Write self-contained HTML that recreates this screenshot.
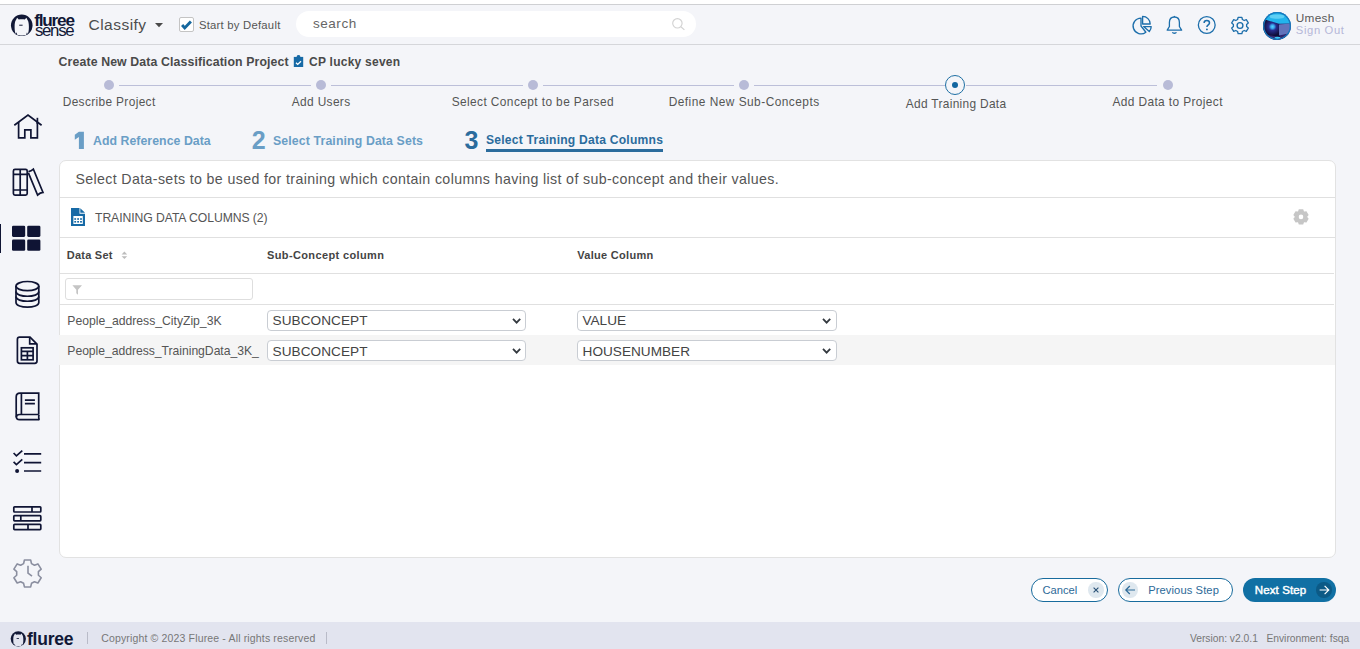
<!DOCTYPE html>
<html><head><meta charset="utf-8">
<style>
*{box-sizing:border-box;margin:0;padding:0}
html,body{width:1360px;height:649px;overflow:hidden;background:#f4f5f9;font-family:"Liberation Sans",sans-serif;color:#444}
.a{position:absolute}
.t{position:absolute;white-space:nowrap}
svg{position:absolute;overflow:visible}
</style></head><body>
<div class="a" style="left:0;top:0;width:1360px;height:4px;background:#fff"></div><div class="a" style="left:0;top:4px;width:1360px;height:1px;background:#cfd0d3"></div><div class="a" style="left:0;top:44px;width:1360px;height:1px;background:#d5d6da"></div><svg style="left:0;top:0" width="80" height="45" viewBox="0 0 80 45">
<circle cx="21.75" cy="25.3" r="10.8" fill="#111836"/>
<path d="M14.6 27 C14.6 23.5 15 21.2 16 20 L17.1 17.7 L18.8 19.5 C20.3 19.1 23.2 19.1 24.7 19.5 L26.4 17.7 L27.5 20 C28.5 21.2 28.9 23.5 28.9 27 C28.9 30.8 28.4 33 27.6 34 L27 32.2 L26.1 35 C24.5 35.6 19 35.6 17.4 35 L16.5 32.2 L15.9 34 C15.1 33 14.6 30.8 14.6 27Z" fill="#f4f5f9"/>
<rect x="19.2" y="24.7" width="3.4" height="1" fill="#111836"/>
</svg><div class="t" style="left:34.30px;top:12.24px;font-size:17.2px;line-height:17.2px;color:#111836;letter-spacing:-1.228px;font-weight:bold;">fluree</div>
<div class="t" style="left:35.00px;top:22.98px;font-size:16.8px;line-height:16.8px;color:#111836;letter-spacing:-1.308px;">sense</div>
<div class="t" style="left:88.50px;top:16.88px;font-size:15.5px;line-height:15.5px;color:#4d4d4d;letter-spacing:0.477px;">Classify</div>
<svg style="left:155px;top:23px" width="8" height="5"><path d="M0 0H8L4 4.3Z" fill="#4a4a4a"/></svg><div class="a" style="left:179.3px;top:17.3px;width:14.6px;height:14.4px;background:#fff;border:1.1px solid #c4c4c4;border-radius:2px"></div><svg style="left:179px;top:17px" width="15" height="15"><path d="M3.1 8.1 L5.7 10.9 L11.9 4.6" stroke="#15679e" stroke-width="2.9" fill="none"/></svg><div class="t" style="left:198.90px;top:19.63px;font-size:11.3px;line-height:11.3px;color:#555;letter-spacing:0.235px;">Start by Default</div>
<div class="a" style="left:295.7px;top:11px;width:400.3px;height:26px;background:#fff;border-radius:13px"></div><div class="t" style="left:312.90px;top:17.17px;font-size:13.5px;line-height:13.5px;color:#666;letter-spacing:0.556px;">search</div>
<svg style="left:671px;top:17.2px" width="16" height="14" viewBox="0 0 16 14"><circle cx="6.4" cy="6.3" r="4.7" stroke="#d3d3d3" stroke-width="1.15" fill="none"/><path d="M9.9 9.7 L13.4 12.9" stroke="#d3d3d3" stroke-width="1.2"/></svg><svg style="left:1128px;top:12px" width="28" height="26" viewBox="0 0 28 26">
<path d="M13 14 L13 6.1 A7.9 7.9 0 1 0 17.86 20.23 Z" stroke="#1c6eab" stroke-width="1.35" fill="none" stroke-linejoin="round"/>
<path d="M14.6 12 L14.6 4.4 A7.6 7.6 0 0 1 22.2 12 Z" stroke="#1c6eab" stroke-width="1.35" fill="none" stroke-linejoin="round"/>
<path d="M15.6 14.6 L23.2 14.6 A7.6 7.6 0 0 1 21.3 19.6 Z" stroke="#1c6eab" stroke-width="1.35" fill="none" stroke-linejoin="round"/>
</svg><svg style="left:1166px;top:15px" width="18" height="20" viewBox="0 0 18 20">
<path d="M8.4 2 C5 2 3.4 4.6 3.4 7.6 L3.4 11.5 L1.2 15.2 L15.6 15.2 L13.4 11.5 L13.4 7.6 C13.4 4.6 11.8 2 8.4 2 Z" stroke="#1c6eab" stroke-width="1.3" fill="none" stroke-linejoin="round"/>
<path d="M8.4 0.9 L8.4 2" stroke="#1c6eab" stroke-width="1.3"/>
<path d="M6.4 17.2 C7 18.6 9.8 18.6 10.4 17.2" stroke="#1c6eab" stroke-width="1.3" fill="none"/>
</svg><svg style="left:1197px;top:16px" width="20" height="19" viewBox="0 0 20 19">
<circle cx="9.75" cy="9" r="8.4" stroke="#1c6eab" stroke-width="1.3" fill="none"/>
<path d="M7.1 7.1 C7.1 5.5 8.3 4.6 9.8 4.6 C11.3 4.6 12.5 5.5 12.5 7 C12.5 8.8 9.9 9 9.9 11" stroke="#1c6eab" stroke-width="1.5" fill="none"/>
<circle cx="9.9" cy="13.4" r="0.95" fill="#1c6eab"/>
</svg><svg style="left:1230px;top:16px" width="20" height="19" viewBox="-10 -9.5 20 19">
<path d="M-1.9 -8.2 L1.9 -8.2 L2.4 -6 L4.2 -5 L6.3 -5.8 L8.3 -2.6 L6.6 -1.1 L6.6 1.1 L8.3 2.6 L6.3 5.8 L4.2 5 L2.4 6 L1.9 8.2 L-1.9 8.2 L-2.4 6 L-4.2 5 L-6.3 5.8 L-8.3 2.6 L-6.6 1.1 L-6.6 -1.1 L-8.3 -2.6 L-6.3 -5.8 L-4.2 -5 L-2.4 -6 Z" stroke="#1c6eab" stroke-width="1.3" fill="none" stroke-linejoin="round"/>
<circle cx="0" cy="0" r="2.9" stroke="#1c6eab" stroke-width="1.4" fill="none"/>
</svg><svg style="left:1263px;top:11.8px" width="28" height="28" viewBox="0 0 28 28">
<defs><clipPath id="avc"><circle cx="14" cy="14" r="13.9"/></clipPath>
<radialGradient id="avl" cx="9.5" cy="14.7" r="9" gradientUnits="userSpaceOnUse"><stop offset="0" stop-color="#55d4fb"/><stop offset="0.2" stop-color="#3aa6ee"/><stop offset="0.42" stop-color="#272d8e"/><stop offset="1" stop-color="#100d38"/></radialGradient></defs>
<g clip-path="url(#avc)">
<rect x="0" y="0" width="28" height="28" fill="#2a2470"/>
<rect x="0" y="6" width="17" height="20" fill="url(#avl)"/>
<path d="M0 0 L28 0 L28 11.5 L16 11.8 L2 7.6 L0 7.6 Z" fill="#22b4ec"/>
<path d="M6 3.5 C10 2 18 2 22 3.5 L20.5 6 C17 7 11 7 7.5 6 Z" fill="#8fe6fc" opacity="0.55"/>
<path d="M16 12.4 L28 11.6 L28 21 L16 23.5 Z" fill="#6273bb"/>
<path d="M0 22 L16 25 L28 21 L28 28 L0 28 Z" fill="#352a70"/>
<ellipse cx="14.5" cy="25.8" rx="3" ry="1.1" fill="#3cc6f5"/>
</g>
<circle cx="14" cy="14" r="13.3" stroke="#1679bd" stroke-width="1.3" fill="none"/>
</svg><div class="t" style="left:1295.80px;top:13.01px;font-size:11.8px;line-height:11.8px;color:#5a5a5a;letter-spacing:0.306px;">Umesh</div>
<div class="t" style="left:1295.80px;top:24.62px;font-size:11.2px;line-height:11.2px;color:#b4b7d8;letter-spacing:0.660px;">Sign Out</div>
<div class="t" style="left:58.60px;top:55.99px;font-size:12.3px;line-height:12.3px;color:#4a4a4a;letter-spacing:0.122px;font-weight:bold;">Create New Data Classification Project</div>
<svg style="left:293px;top:54px" width="12" height="14" viewBox="0 0 12 14">
<rect x="0.8" y="2.9" width="9.4" height="10.1" fill="#176aa6"/>
<path d="M3.6 3.2 L4 1.6 C4.3 0.9 6.7 0.9 7 1.6 L7.4 3.2 Z" fill="#176aa6"/>
<path d="M3 8.8 L4.7 10.4 L8 7.2" stroke="#fff" stroke-width="1.35" fill="none"/>
</svg><div class="t" style="left:309.10px;top:56.24px;font-size:12px;line-height:12px;color:#4a4a4a;letter-spacing:0.244px;font-weight:bold;">CP lucky seven</div>
<div class="a" style="left:104.0px;top:80px;width:10px;height:10px;border-radius:50%;background:#b8bbd7"></div><div class="a" style="left:316.0px;top:80px;width:10px;height:10px;border-radius:50%;background:#b8bbd7"></div><div class="a" style="left:527.7px;top:80px;width:10px;height:10px;border-radius:50%;background:#b8bbd7"></div><div class="a" style="left:739.0px;top:80px;width:10px;height:10px;border-radius:50%;background:#b8bbd7"></div><div class="a" style="left:945.2px;top:75.2px;width:20px;height:20px;border:1.7px solid #1e6fa3;border-radius:50%;background:#f4f5f9"></div><div class="a" style="left:952.0px;top:82px;width:6.4px;height:6.4px;border-radius:50%;background:#1266a0"></div><div class="a" style="left:1162.5px;top:80px;width:10px;height:10px;border-radius:50%;background:#b8bbd7"></div><div class="a" style="left:119.0px;top:85px;width:192.0px;height:1px;background:#bcbfd9"></div><div class="a" style="left:331.0px;top:85px;width:191.7px;height:1px;background:#bcbfd9"></div><div class="a" style="left:542.7px;top:85px;width:191.3px;height:1px;background:#bcbfd9"></div><div class="a" style="left:754.0px;top:85px;width:191.2px;height:1px;background:#bcbfd9"></div><div class="a" style="left:966.4px;top:85px;width:191.1px;height:1px;background:#bcbfd9"></div><div class="t" style="left:62.70px;top:96.83px;font-size:11.9px;line-height:11.9px;color:#555;letter-spacing:0.353px;">Describe Project</div>
<div class="t" style="left:291.85px;top:96.83px;font-size:11.9px;line-height:11.9px;color:#555;letter-spacing:0.343px;">Add Users</div>
<div class="t" style="left:451.70px;top:96.83px;font-size:11.9px;line-height:11.9px;color:#555;letter-spacing:0.404px;">Select Concept to be Parsed</div>
<div class="t" style="left:668.70px;top:96.83px;font-size:11.9px;line-height:11.9px;color:#555;letter-spacing:0.471px;">Define New Sub-Concepts</div>
<div class="t" style="left:905.85px;top:98.83px;font-size:11.9px;line-height:11.9px;color:#555;letter-spacing:0.315px;">Add Training Data</div>
<div class="t" style="left:1112.40px;top:96.83px;font-size:11.9px;line-height:11.9px;color:#555;letter-spacing:0.389px;">Add Data to Project</div>
<svg style="left:0;top:0" width="100" height="160"><path d="M74.8 134.7 L78.9 131.7 L83.9 131.7 L83.9 148.9 L78.9 148.9 L78.9 136.9 L74.8 139.7 Z" fill="#6a9ec6"/></svg><div class="t" style="left:93.00px;top:134.69px;font-size:12.3px;line-height:12.3px;color:#6a9ec6;letter-spacing:0.048px;font-weight:bold;">Add Reference Data</div>
<div class="t" style="left:251.80px;top:128.04px;font-size:25px;line-height:25px;color:#6a9ec6;font-weight:bold;">2</div>
<div class="t" style="left:273.00px;top:134.89px;font-size:12.3px;line-height:12.3px;color:#6a9ec6;letter-spacing:0.126px;font-weight:bold;">Select Training Data Sets</div>
<div class="t" style="left:464.40px;top:128.34px;font-size:25px;line-height:25px;color:#2b6c9d;font-weight:bold;">3</div>
<div class="t" style="left:486.00px;top:134.16px;font-size:12.1px;line-height:12.1px;color:#2b6c9d;letter-spacing:0.230px;font-weight:bold;">Select Training Data Columns</div>
<div class="a" style="left:486px;top:149.2px;width:177px;height:2.5px;background:#2b6c9d"></div><div class="a" style="left:58.5px;top:160px;width:1277.5px;height:397.5px;background:#fff;border:1px solid #e2e2e2;border-radius:7px"></div><div class="a" style="left:59px;top:197px;width:1276px;height:1px;background:#e0e0e0"></div><div class="a" style="left:59px;top:237px;width:1276px;height:1px;background:#e0e0e0"></div><div class="a" style="left:59px;top:273px;width:1275px;height:1px;background:#e0e0e0"></div><div class="a" style="left:59px;top:304px;width:1275px;height:1px;background:#e0e0e0"></div><div class="t" style="left:75.40px;top:172.18px;font-size:14.2px;line-height:14.2px;color:#555;letter-spacing:0.371px;">Select Data-sets to be used for training which contain columns having list of sub-concept and their values.</div>
<svg style="left:71px;top:208px" width="14" height="18" viewBox="0 0 14 18">
<path d="M0 0 L8.5 0 L8.5 5.8 L14 5.8 L14 18 L0 18 Z" fill="#176aa6"/>
<path d="M9.3 0.2 L14 4.8 L9.3 4.8 Z" fill="#176aa6"/>
<rect x="2.4" y="8" width="9.4" height="8" fill="#fff"/>
<rect x="3.3" y="10.2" width="1.8" height="1.6" fill="#176aa6"/><rect x="6.2" y="10.2" width="1.8" height="1.6" fill="#176aa6"/><rect x="9.1" y="10.2" width="1.8" height="1.6" fill="#176aa6"/>
<rect x="3.3" y="13" width="1.8" height="1.6" fill="#176aa6"/><rect x="6.2" y="13" width="1.8" height="1.6" fill="#176aa6"/><rect x="9.1" y="13" width="1.8" height="1.6" fill="#176aa6"/>
</svg><div class="t" style="left:95.00px;top:212.27px;font-size:12.2px;line-height:12.2px;color:#555;letter-spacing:-0.068px;">TRAINING DATA COLUMNS (2)</div>
<svg style="left:1280px;top:200px" width="40" height="40" viewBox="0 0 40 40">
<path d="M18.00 11.47 L18.80 9.31 L23.20 9.31 L24.00 11.47 L24.20 11.59 L26.47 11.20 L28.67 15.01 L27.20 16.79 L27.20 17.01 L28.67 18.79 L26.47 22.60 L24.20 22.21 L24.00 22.33 L23.20 24.49 L18.80 24.49 L18.00 22.33 L17.80 22.21 L15.53 22.60 L13.33 18.79 L14.80 17.01 L14.80 16.79 L13.33 15.01 L15.53 11.20 L17.80 11.59Z M21 14.6 A2.3 2.3 0 1 0 21 19.2 A2.3 2.3 0 1 0 21 14.6Z" fill="#c6c6c6" fill-rule="evenodd"/>
</svg><div class="t" style="left:66.70px;top:250.19px;font-size:11px;line-height:11px;color:#444;letter-spacing:0.255px;font-weight:bold;">Data Set</div>
<svg style="left:121px;top:251px" width="7" height="9" viewBox="0 0 7 9"><path d="M0.6 3.4 L3.4 0.5 L6.2 3.4Z M0.6 5.2 L3.4 8.1 L6.2 5.2Z" fill="#bcbcbc"/></svg><div class="t" style="left:267.00px;top:249.99px;font-size:11px;line-height:11px;color:#444;letter-spacing:0.376px;font-weight:bold;">Sub-Concept column</div>
<div class="t" style="left:577.20px;top:249.99px;font-size:11px;line-height:11px;color:#444;letter-spacing:0.297px;font-weight:bold;">Value Column</div>
<div class="a" style="left:65.4px;top:278.2px;width:187.2px;height:21.4px;border:1px solid #dedede;border-radius:3px;background:#fff"></div><svg style="left:71.5px;top:285px" width="11" height="10" viewBox="0 0 11 10"><path d="M0.4 0.2 L10 0.2 L6 4.8 L6 9.8 L4.3 8.2 L4.3 4.8 Z" fill="#c4c4c4"/></svg><div class="a" style="left:59px;top:335px;width:1276px;height:29.7px;background:#f5f5f5"></div><div class="t" style="left:67.30px;top:314.97px;font-size:12.2px;line-height:12.2px;color:#555;letter-spacing:-0.010px;">People_address_CityZip_3K</div>
<div class="a" style="left:267.2px;top:310.2px;width:259.3px;height:20.4px;border:1px solid #c9cdd3;border-radius:4px;background:#fff"></div><div class="t" style="left:272.60px;top:314.29px;font-size:13.6px;line-height:13.6px;color:#444;letter-spacing:0.060px;">SUBCONCEPT</div>
<svg style="left:511.9px;top:317.5px" width="10" height="6" viewBox="0 0 10 6"><path d="M1 0.8 L4.6 4.6 L8.2 0.8" stroke="#343a40" stroke-width="1.8" fill="none"/></svg><div class="a" style="left:577.2px;top:310.2px;width:259.5px;height:20.4px;border:1px solid #c9cdd3;border-radius:4px;background:#fff"></div><div class="t" style="left:582.60px;top:314.29px;font-size:13.6px;line-height:13.6px;color:#444;letter-spacing:-0.048px;">VALUE</div>
<svg style="left:822.1px;top:317.5px" width="10" height="6" viewBox="0 0 10 6"><path d="M1 0.8 L4.6 4.6 L8.2 0.8" stroke="#343a40" stroke-width="1.8" fill="none"/></svg><div class="t" style="left:67.30px;top:345.27px;font-size:12.2px;line-height:12.2px;color:#555;letter-spacing:-0.038px;">People_address_TrainingData_3K_</div>
<div class="a" style="left:267.2px;top:340.4px;width:259.3px;height:20.4px;border:1px solid #c9cdd3;border-radius:4px;background:#fff"></div><div class="t" style="left:272.60px;top:344.59px;font-size:13.6px;line-height:13.6px;color:#444;letter-spacing:0.060px;">SUBCONCEPT</div>
<svg style="left:511.9px;top:347.7px" width="10" height="6" viewBox="0 0 10 6"><path d="M1 0.8 L4.6 4.6 L8.2 0.8" stroke="#343a40" stroke-width="1.8" fill="none"/></svg><div class="a" style="left:577.2px;top:340.4px;width:259.5px;height:20.4px;border:1px solid #c9cdd3;border-radius:4px;background:#fff"></div><div class="t" style="left:582.60px;top:344.59px;font-size:13.6px;line-height:13.6px;color:#444;letter-spacing:0.010px;">HOUSENUMBER</div>
<svg style="left:822.1px;top:347.7px" width="10" height="6" viewBox="0 0 10 6"><path d="M1 0.8 L4.6 4.6 L8.2 0.8" stroke="#343a40" stroke-width="1.8" fill="none"/></svg><div class="a" style="left:1030.9px;top:577.7px;width:77.2px;height:24.3px;border:1.45px solid #186b9d;border-radius:13px;background:#fff"></div><div class="t" style="left:1042.60px;top:584.82px;font-size:11.2px;line-height:11.2px;color:#2d6a98;letter-spacing:-0.053px;">Cancel</div>
<div class="a" style="left:1088.3px;top:582.3px;width:15.4px;height:15.4px;border-radius:50%;background:#dfe8ef"></div><svg style="left:1093px;top:587px" width="6" height="6"><path d="M0.6 0.6 L5.4 5.4 M5.4 0.6 L0.6 5.4" stroke="#274f75" stroke-width="1.1"/></svg><div class="a" style="left:1118.1px;top:578px;width:114.7px;height:23.7px;border:1.45px solid #186b9d;border-radius:12px;background:#fff"></div><div class="a" style="left:1122.3px;top:582.2px;width:15.4px;height:15.4px;border-radius:50%;background:#dfe8ef"></div><svg style="left:1125px;top:585px" width="11" height="10" viewBox="0 0 11 10"><path d="M0.8 5 L10 5 M4.8 1 L0.8 5 L4.8 9" stroke="#2d6a98" stroke-width="1.2" fill="none"/></svg><div class="t" style="left:1148.20px;top:584.62px;font-size:11.2px;line-height:11.2px;color:#2d6a98;letter-spacing:0.089px;">Previous Step</div>
<div class="a" style="left:1243.1px;top:577.9px;width:93px;height:24.1px;border-radius:12px;background:#1170a4"></div><div class="t" style="left:1254.80px;top:584.77px;font-size:11.5px;line-height:11.5px;color:#fff;letter-spacing:0.113px;-webkit-text-stroke:0.45px #fff;">Next Step</div>
<div class="a" style="left:1316.3px;top:582.3px;width:15.4px;height:15.4px;border-radius:50%;background:#0c5a86"></div><svg style="left:1319px;top:585px" width="11" height="10" viewBox="0 0 11 10"><path d="M0.6 5 L9.8 5 M5.6 0.8 L9.8 5 L5.6 9.2" stroke="#fff" stroke-width="1.15" fill="none"/></svg><div class="a" style="left:0;top:224.2px;width:1.3px;height:28.5px;background:#0f1434"></div><svg style="left:0;top:0" width="58" height="600" viewBox="0 0 58 600">
<g stroke="#0f1434" stroke-width="1.7" fill="none" stroke-linejoin="miter">
<path d="M14.3 125.3 L28 115 L41.6 125.3"/>
<path d="M37.4 117.8 L37.4 124"/>
<path d="M18.6 122 L18.6 137.8 L24.8 137.8 L24.8 129.9 L30.9 129.9 L30.9 137.8 L37.4 137.8 L37.4 122"/>
<rect x="13.4" y="169.4" width="13.8" height="25.8" rx="1.6"/>
<path d="M20.2 169.4 L20.2 195.2 M13.4 174.3 L27.2 174.3 M13.4 190 L27.2 190"/>
<path d="M28.4 171.6 C30.5 171.4 32 170.6 33.4 169.2 L43 192.4 C41 192.6 39.2 193.6 37.6 195 L28.4 172.8"/>
<ellipse cx="27.4" cy="286.1" rx="11.4" ry="4.6"/>
<path d="M16 286.1 L16 302.5 C16 308.6 38.8 308.6 38.8 302.5 L38.8 286.1"/>
<path d="M16 291.6 C16 297.8 38.8 297.8 38.8 291.6 M16 296.6 C16 302.8 38.8 302.8 38.8 296.6"/>
<path d="M19.6 337.1 L30 337.1 L37 344.2 L37 361 C37 362.5 36.3 363.3 34.8 363.3 L19.6 363.3 C18.1 363.3 17.4 362.5 17.4 361 L17.4 339.4 C17.4 337.9 18.1 337.1 19.6 337.1 Z"/>
<path d="M29.7 337.3 L29.7 343.9 L36.8 343.9"/>
<rect x="21.4" y="347.8" width="11.7" height="12"/>
<path d="M21.4 351.3 L33.1 351.3 M21.4 355.7 L33.1 355.7 M27.4 351.3 L27.4 359.8"/>
<path d="M38.7 414.5 L38.7 393.2 L20 393.2 C17.5 393.2 16.2 394.7 16.2 397 L16.2 416.3 C16.2 418.5 17.4 419.7 19.6 419.7 L39.4 419.7"/>
<path d="M16.3 417.3 C16.3 415.4 17.6 414.5 19.6 414.5 L38.7 414.5"/>
<path d="M39.4 419.7 C38.5 418.6 38.5 415.8 39.2 414.8"/>
<path d="M21.4 393.2 L21.4 414.5"/>
<path d="M24.9 400.1 L34.9 400.1 M24.9 403.6 L34.9 403.6"/>
<path d="M13.6 453 L16.4 455.8 L22.3 450.6 M13.6 461.8 L16.4 464.6 L22.3 459.4"/>
<path d="M24 453.9 L41.2 453.9 M24 462.6 L41.2 462.6 M24 471 L41.2 471"/>
<rect x="13.8" y="506.8" width="27" height="5.2" rx="0.8"/>
<rect x="13.8" y="515.6" width="27" height="5.2" rx="0.8"/>
<rect x="13.8" y="524.4" width="27" height="5.2" rx="0.8"/>
<path d="M32 506.8 L32 512 M20.8 515.6 L20.8 520.8 M28 524.4 L28 529.6"/>
</g>
<circle cx="17.1" cy="471.1" r="2" fill="#0f1434"/>
<g fill="#0f1434">
<rect x="12" y="225.8" width="13.2" height="11.1" rx="1.3"/>
<rect x="27.2" y="225.8" width="13.2" height="11.1" rx="1.3"/>
<rect x="12" y="239.4" width="13.2" height="11.3" rx="1.3"/>
<rect x="27.2" y="239.4" width="13.2" height="11.3" rx="1.3"/>
</g>
<path d="M24.42 559.96 L30.68 559.96 L31.50 563.58 L34.46 565.23 L37.91 563.91 L41.20 569.17 L38.41 571.64 L38.41 575.26 L41.20 577.73 L37.91 582.99 L34.46 581.68 L31.50 583.32 L30.68 586.94 L24.42 586.94 L23.60 583.32 L20.64 581.68 L17.19 582.99 L13.90 577.73 L16.69 575.26 L16.69 571.64 L13.90 569.17 L17.19 563.91 L20.64 565.23 L23.60 563.58Z" stroke="#8b8fa0" stroke-width="1.6" fill="none" stroke-linejoin="round"/>
<path d="M28 565.8 L28 573 L32 576.2" stroke="#8b8fa0" stroke-width="1.6" fill="none"/>
</svg><div class="a" style="left:0;top:622px;width:1360px;height:27px;background:#e2e4ef"></div><svg style="left:0;top:620px" width="80" height="29" viewBox="0 0 80 29">
<circle cx="18.3" cy="18.85" r="7.6" fill="#111836"/>
<path transform="translate(18.3 18.85) scale(0.7037) translate(-21.75 -25.3)" d="M14.6 27 C14.6 23.5 15 21.2 16 20 L17.1 17.7 L18.8 19.5 C20.3 19.1 23.2 19.1 24.7 19.5 L26.4 17.7 L27.5 20 C28.5 21.2 28.9 23.5 28.9 27 C28.9 30.8 28.4 33 27.6 34 L27 32.2 L26.1 35 C24.5 35.6 19 35.6 17.4 35 L16.5 32.2 L15.9 34 C15.1 33 14.6 30.8 14.6 27Z" fill="#e2e4ef"/>
<rect x="16.6" y="18.2" width="2.4" height="0.8" fill="#111836"/>
</svg><div class="t" style="left:27.00px;top:631.39px;font-size:17.5px;line-height:17.5px;color:#111836;letter-spacing:-0.251px;font-weight:bold;">fluree</div>
<div class="a" style="left:87px;top:632px;width:1px;height:12px;background:#b9bbc8"></div><div class="t" style="left:101.20px;top:633.31px;font-size:10.5px;line-height:10.5px;color:#777;letter-spacing:0.154px;">Copyright © 2023 Fluree - All rights reserved</div>
<div class="a" style="left:326px;top:632px;width:1px;height:12px;background:#b9bbc8"></div><div class="t" style="left:1189.90px;top:633.88px;font-size:10.3px;line-height:10.3px;color:#777;letter-spacing:-0.010px;white-space:pre;">Version: v2.0.1   Environment: fsqa</div>
</body></html>
